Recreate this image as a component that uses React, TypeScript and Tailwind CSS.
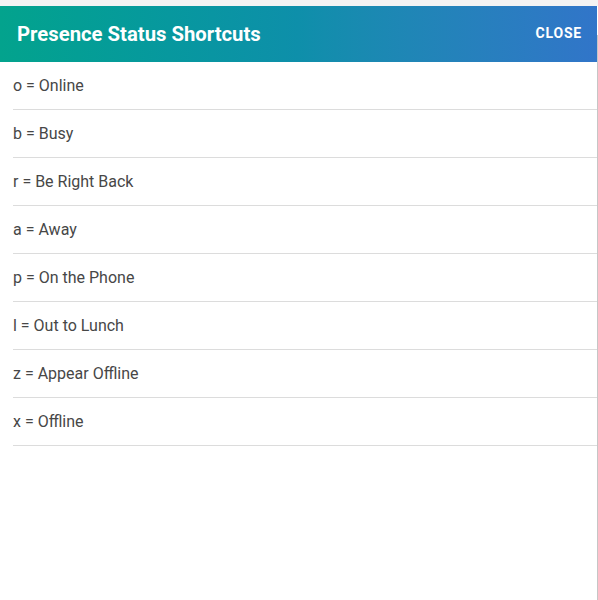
import React from 'react';

const SHORTCUTS = [
    { key: 'o', label: 'Online' },
    { key: 'b', label: 'Busy' },
    { key: 'r', label: 'Be Right Back' },
    { key: 'a', label: 'Away' },
    { key: 'p', label: 'On the Phone' },
    { key: 'l', label: 'Out to Lunch' },
    { key: 'z', label: 'Appear Offline' },
    { key: 'x', label: 'Offline' },
];

export default function App() {
    return (
        <div className="w-[598px] h-[600px] bg-[#f3f3f3] pt-[6px] overflow-hidden" style={{ fontFamily: 'Roboto, "Liberation Sans", sans-serif' }}>
            <div className="flex h-[594px]">
                <div className="w-[597px] bg-white flex flex-col">
                    <div className="h-[56px] flex items-center justify-between pl-[17px] pr-[15px] bg-gradient-to-r from-[#03a38d] via-[#0e8faa] to-[#3175c9]">
                        <h1 className="text-white text-[20.3px] font-bold leading-none">Presence Status Shortcuts</h1>
                        <button className="text-white text-[14px] font-bold leading-none tracking-[0.8px] -mt-[2px]">CLOSE</button>
                    </div>
                    <ul className="pl-[13px]">
                        {SHORTCUTS.map((s) => (
                            <li key={s.key} className="h-[48px] flex items-center border-b border-[#dcdcdc] text-[16px] text-[#474747]">
                                {s.key} = {s.label}
                            </li>
                        ))}
                    </ul>
                </div>
                <div className="w-px bg-white flex flex-col">
                    <div className="h-[29px]" />
                    <div className="flex-1 bg-[#c6c6c6]" />
                </div>
            </div>
        </div>
    );
}
